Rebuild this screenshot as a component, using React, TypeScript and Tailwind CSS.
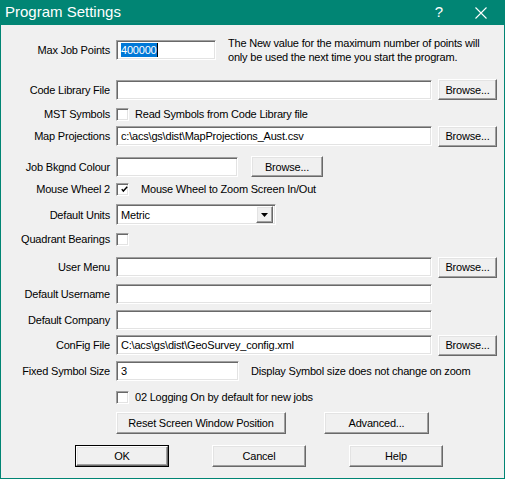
import type { ReactNode } from 'react';

const field =
  'bg-white border border-t-[#a0a0a0] border-l-[#a0a0a0] border-r-white border-b-white shadow-[inset_1px_1px_0_#696969,inset_-1px_-1px_0_#e3e3e3] flex items-center pl-[4px] overflow-hidden whitespace-nowrap';

const raised =
  'bg-[#f0f0f0] border border-t-white border-l-white border-r-[#696969] border-b-[#696969] shadow-[inset_-1px_-1px_0_#a0a0a0,inset_1px_1px_0_#e3e3e3] flex items-center justify-center whitespace-nowrap';

function Label({ children }: { children?: ReactNode }) {
  return <div className="w-[109px] shrink-0 text-right whitespace-nowrap">{children}</div>;
}

function Field({ w, value }: { w: string; value?: string }) {
  return <div className={`${field} ${w} h-[20px]`}>{value}</div>;
}

function Browse({ w = 'w-[59px]' }: { w?: string }) {
  return <div className={`${raised} ${w} h-[21px]`}>Browse...</div>;
}

function Check({ on = false }: { on?: boolean }) {
  return (
    <div className={`${field} w-[13px] h-[13px] shrink-0 pl-0 justify-center`}>
      {on && (
        <svg width="9" height="9" viewBox="0 0 9 9">
          <path d="M1 4 L3 6.5 L8 1" fill="none" stroke="#000" strokeWidth="1.8" />
        </svg>
      )}
    </div>
  );
}

export default function App() {
  return (
    <div className="w-[505px] h-[479px] bg-[#018574] flex flex-col pl-px pr-px pb-px select-none">
      {/* Title bar */}
      <div className="h-[25px] shrink-0 flex items-center text-white font-['Liberation_Sans',sans-serif] text-[15px] pl-[4px]">
        <span className="flex-1">Program Settings</span>
        <span className="w-[20px] text-center mr-[26px]">?</span>
        <svg width="12" height="12" viewBox="0 0 12 12" className="mr-[17px]">
          <path d="M0.5 0.5 L11.5 11.5 M11.5 0.5 L0.5 11.5" stroke="#fff" strokeWidth="1.1" />
        </svg>
      </div>

      <div className="flex-1 bg-[#f0f0f0] text-black font-['Liberation_Sans',Arial,sans-serif] text-[11px] tracking-[-0.2px] leading-[14px]">
        <div className="flex items-center h-[20px] mt-[15px] gap-[6px]">
          <Label>Max Job Points</Label>
          <div className={`${field} w-[100px] h-[20px] pl-[3px]`}>
            <span className="bg-[#0078d7] text-white">400000</span>
            <span className="w-px h-[14px] bg-black" />
          </div>
          <div className="ml-[6px] leading-[14px] whitespace-nowrap">
            The New value for the maximum number of points will
            <br />
            only be used the next time you start the program.
          </div>
        </div>

        <div className="flex items-center h-[21px] mt-[19px] gap-[6px]">
          <Label>Code Library File</Label>
          <Field w="w-[316px]" />
          <Browse />
        </div>

        <div className="flex items-center h-[14px] mt-[7px] gap-[6px]">
          <Label>MST Symbols</Label>
          <Check />
          <span>Read Symbols from Code Library file</span>
        </div>

        <div className="flex items-center h-[20px] mt-[5px] gap-[6px]">
          <Label>Map Projections</Label>
          <Field w="w-[316px]" value="c:\acs\gs\dist\MapProjections_Aust.csv" />
          <Browse />
        </div>

        <div className="flex items-center h-[21px] mt-[10px] gap-[6px]">
          <Label>Job Bkgnd Colour</Label>
          <Field w="w-[122px]" />
          <div className="ml-[7px]">
            <Browse w="w-[72px]" />
          </div>
        </div>

        <div className="flex items-center h-[14px] mt-[5px] gap-[6px]">
          <Label>Mouse Wheel 2</Label>
          <Check on />
          <span className="ml-[6px]">Mouse Wheel to Zoom Screen In/Out</span>
        </div>

        <div className="flex items-center h-[21px] mt-[8px] gap-[6px]">
          <Label>Default Units</Label>
          <div className={`${field} w-[160px] h-[21px] pl-[3px] pr-[2px] justify-between`}>
            <span>Metric</span>
            <div className={`${raised} w-[17px] h-[17px]`}>
              <svg width="7" height="4" viewBox="0 0 7 4">
                <path d="M0 0 H7 L3.5 4 Z" fill="#000" />
              </svg>
            </div>
          </div>
        </div>

        <div className="flex items-center h-[14px] mt-[7px] gap-[6px]">
          <Label>Quadrant Bearings</Label>
          <Check />
        </div>

        <div className="flex items-center h-[20px] mt-[11px] gap-[6px]">
          <Label>User Menu</Label>
          <Field w="w-[316px]" />
          <Browse />
        </div>

        <div className="flex items-center h-[20px] mt-[7px] gap-[6px]">
          <Label>Default Username</Label>
          <Field w="w-[316px]" />
        </div>

        <div className="flex items-center h-[20px] mt-[6px] gap-[6px]">
          <Label>Default Company</Label>
          <Field w="w-[316px]" />
        </div>

        <div className="flex items-center h-[20px] mt-[5px] gap-[6px]">
          <Label>ConFig File</Label>
          <Field w="w-[316px]" value="C:\acs\gs\dist\GeoSurvey_config.xml" />
          <Browse />
        </div>

        <div className="flex items-center h-[20px] mt-[6px] gap-[6px]">
          <Label>Fixed Symbol Size</Label>
          <Field w="w-[123px]" value="3" />
          <span className="ml-[6px] whitespace-nowrap">Display Symbol size does not change on zoom</span>
        </div>

        <div className="flex items-center h-[14px] mt-[9px] gap-[6px]">
          <Label />
          <Check />
          <span>02 Logging On by default for new jobs</span>
        </div>

        <div className="flex items-center h-[22px] mt-[8px] gap-[6px]">
          <Label />
          <div className={`${raised} w-[170px] h-[22px]`}>Reset Screen Window Position</div>
          <div className={`${raised} w-[105px] h-[22px] ml-[32px]`}>Advanced...</div>
        </div>

        <div className="flex items-center h-[22px] mt-[11px] pl-[74px] gap-[43px]">
          <div className="border border-black">
            <div className={`${raised} w-[92px] h-[20px]`}>OK</div>
          </div>
          <div className={`${raised} w-[94px] h-[22px]`}>Cancel</div>
          <div className={`${raised} w-[94px] h-[22px]`}>Help</div>
        </div>
      </div>
    </div>
  );
}
